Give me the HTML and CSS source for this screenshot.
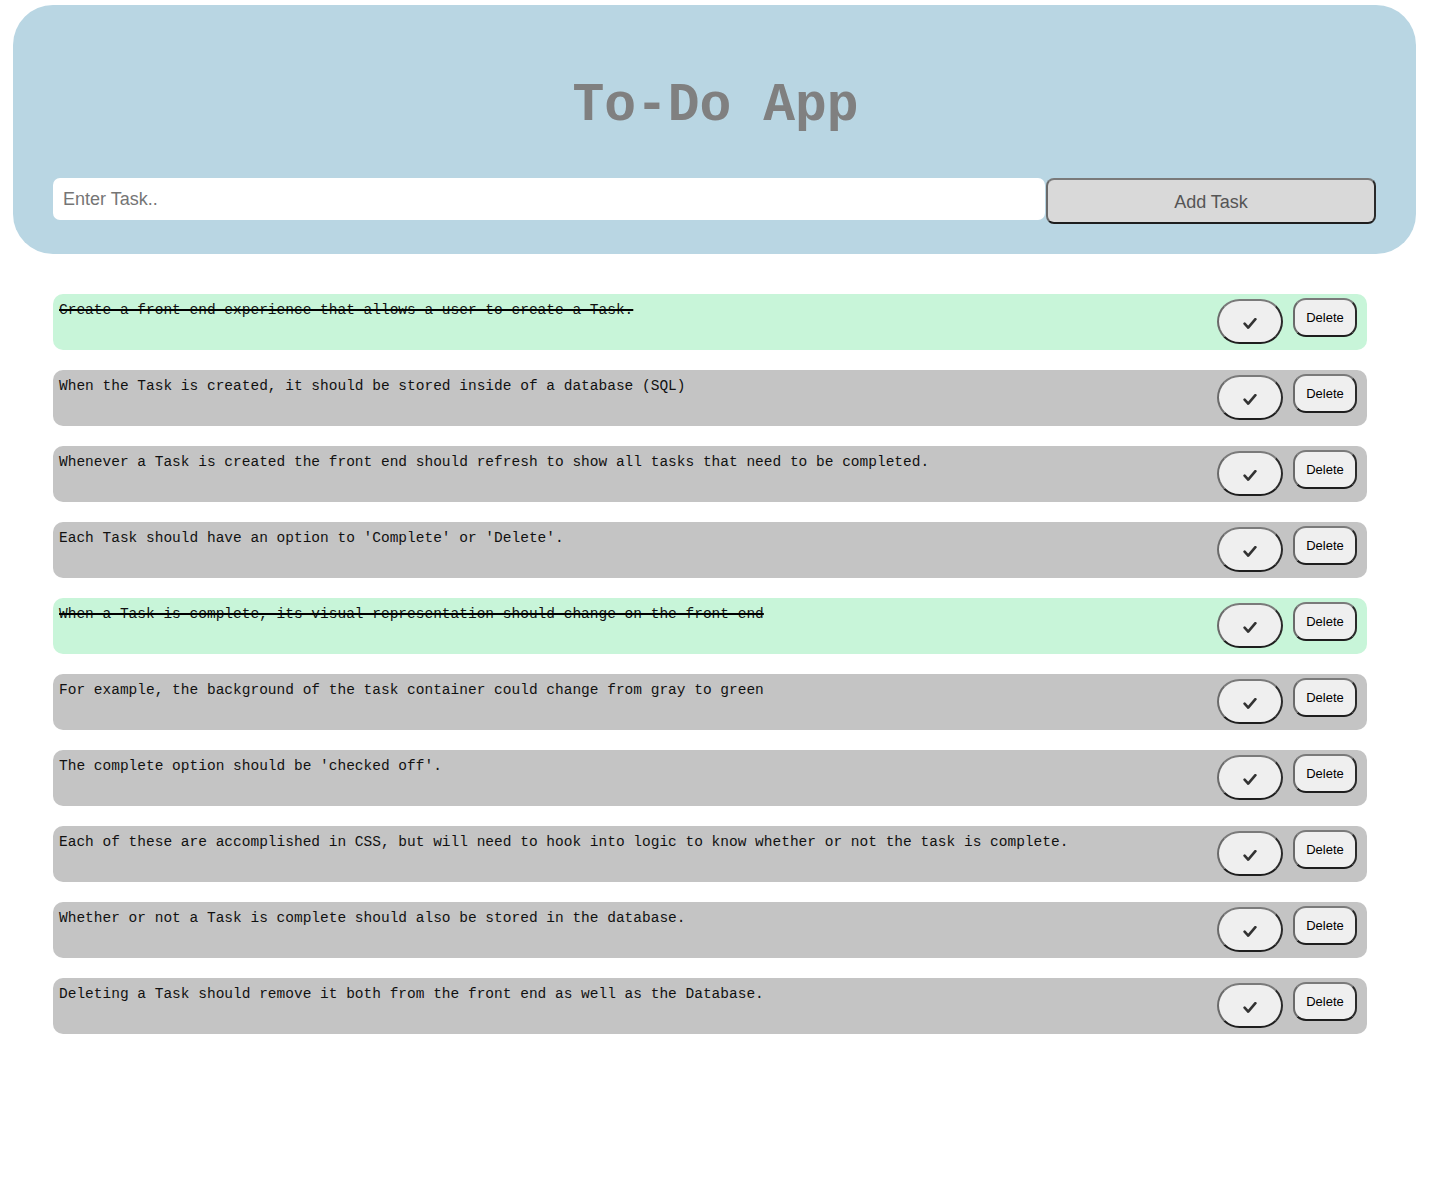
FILE: index.html
```html
<!DOCTYPE html>
<html lang="en">
<head>
<meta charset="utf-8">
<title>To-Do App</title>
<link rel="stylesheet" href="styles.css">
</head>
<body>
<header class="header">
  <h1 class="title">To-Do App</h1>
  <form class="add-form">
    <input class="task-input" type="text" placeholder="Enter Task..">
    <button class="add-btn" type="button">Add Task</button>
  </form>
</header>
<ul class="task-list">
  <li class="task done"><span class="task-text">Create a front end experience that allows a user to create a Task.</span><div class="actions"><button class="check-btn" type="button"><svg class="check-icon" viewBox="0 0 14 11"><path d="M1.6 5.6 L5.2 9.6 L12.4 1.2" fill="none" stroke="#333" stroke-width="2.6" stroke-linecap="round" stroke-linejoin="round"/></svg></button><button class="del-btn" type="button">Delete</button></div></li>
  <li class="task"><span class="task-text">When the Task is created, it should be stored inside of a database (SQL)</span><div class="actions"><button class="check-btn" type="button"><svg class="check-icon" viewBox="0 0 14 11"><path d="M1.6 5.6 L5.2 9.6 L12.4 1.2" fill="none" stroke="#333" stroke-width="2.6" stroke-linecap="round" stroke-linejoin="round"/></svg></button><button class="del-btn" type="button">Delete</button></div></li>
  <li class="task"><span class="task-text">Whenever a Task is created the front end should refresh to show all tasks that need to be completed.</span><div class="actions"><button class="check-btn" type="button"><svg class="check-icon" viewBox="0 0 14 11"><path d="M1.6 5.6 L5.2 9.6 L12.4 1.2" fill="none" stroke="#333" stroke-width="2.6" stroke-linecap="round" stroke-linejoin="round"/></svg></button><button class="del-btn" type="button">Delete</button></div></li>
  <li class="task"><span class="task-text">Each Task should have an option to 'Complete' or 'Delete'.</span><div class="actions"><button class="check-btn" type="button"><svg class="check-icon" viewBox="0 0 14 11"><path d="M1.6 5.6 L5.2 9.6 L12.4 1.2" fill="none" stroke="#333" stroke-width="2.6" stroke-linecap="round" stroke-linejoin="round"/></svg></button><button class="del-btn" type="button">Delete</button></div></li>
  <li class="task done"><span class="task-text">When a Task is complete, its visual representation should change on the front end</span><div class="actions"><button class="check-btn" type="button"><svg class="check-icon" viewBox="0 0 14 11"><path d="M1.6 5.6 L5.2 9.6 L12.4 1.2" fill="none" stroke="#333" stroke-width="2.6" stroke-linecap="round" stroke-linejoin="round"/></svg></button><button class="del-btn" type="button">Delete</button></div></li>
  <li class="task"><span class="task-text">For example, the background of the task container could change from gray to green</span><div class="actions"><button class="check-btn" type="button"><svg class="check-icon" viewBox="0 0 14 11"><path d="M1.6 5.6 L5.2 9.6 L12.4 1.2" fill="none" stroke="#333" stroke-width="2.6" stroke-linecap="round" stroke-linejoin="round"/></svg></button><button class="del-btn" type="button">Delete</button></div></li>
  <li class="task"><span class="task-text">The complete option should be 'checked off'.</span><div class="actions"><button class="check-btn" type="button"><svg class="check-icon" viewBox="0 0 14 11"><path d="M1.6 5.6 L5.2 9.6 L12.4 1.2" fill="none" stroke="#333" stroke-width="2.6" stroke-linecap="round" stroke-linejoin="round"/></svg></button><button class="del-btn" type="button">Delete</button></div></li>
  <li class="task"><span class="task-text">Each of these are accomplished in CSS, but will need to hook into logic to know whether or not the task is complete.</span><div class="actions"><button class="check-btn" type="button"><svg class="check-icon" viewBox="0 0 14 11"><path d="M1.6 5.6 L5.2 9.6 L12.4 1.2" fill="none" stroke="#333" stroke-width="2.6" stroke-linecap="round" stroke-linejoin="round"/></svg></button><button class="del-btn" type="button">Delete</button></div></li>
  <li class="task"><span class="task-text">Whether or not a Task is complete should also be stored in the database.</span><div class="actions"><button class="check-btn" type="button"><svg class="check-icon" viewBox="0 0 14 11"><path d="M1.6 5.6 L5.2 9.6 L12.4 1.2" fill="none" stroke="#333" stroke-width="2.6" stroke-linecap="round" stroke-linejoin="round"/></svg></button><button class="del-btn" type="button">Delete</button></div></li>
  <li class="task"><span class="task-text">Deleting a Task should remove it both from the front end as well as the Database.</span><div class="actions"><button class="check-btn" type="button"><svg class="check-icon" viewBox="0 0 14 11"><path d="M1.6 5.6 L5.2 9.6 L12.4 1.2" fill="none" stroke="#333" stroke-width="2.6" stroke-linecap="round" stroke-linejoin="round"/></svg></button><button class="del-btn" type="button">Delete</button></div></li>
</ul>
</body>
</html>
```

FILE: styles.css
```css
html, body {
  margin: 0;
  padding: 0;
  background: #ffffff;
}

body {
  font-family: "Liberation Sans", Arial, sans-serif;
}

.header {
  margin: 5px 13px 0 13px;
  padding: 71px 40px 30px 40px;
  background: #b9d6e3;
  border-radius: 40px;
}

.title {
  margin: 0;
  text-align: center;
  font-family: "Liberation Mono", "Courier New", monospace;
  font-weight: bold;
  font-size: 53px;
  line-height: 60px;
  color: #808080;
  padding-left: 2px;
}

.add-form {
  display: flex;
  align-items: flex-start;
  gap: 1px;
  margin-top: 42px;
}

.task-input {
  flex: 1;
  height: 42px;
  box-sizing: border-box;
  border: none;
  border-radius: 7px;
  padding: 0 10px;
  font-family: "Liberation Sans", Arial, sans-serif;
  font-size: 18px;
  background: #ffffff;
  outline: none;
}

.task-input::placeholder {
  color: #757575;
}

.add-btn {
  width: 330px;
  height: 46px;
  box-sizing: border-box;
  background: #d9d9d9;
  border: 2px solid;
  border-color: #7a7a7a #2a2a2a #1e1e1e #6a6a6a;
  border-radius: 8px;
  font-family: "Liberation Sans", Arial, sans-serif;
  font-size: 18px;
  color: #555555;
  padding: 2px 0 0 0;
}

.task-list {
  list-style: none;
  margin: 40px 62px 0 53px;
  padding: 0;
  display: flex;
  flex-direction: column;
  gap: 20px;
}

.task {
  display: flex;
  align-items: flex-start;
  justify-content: space-between;
  height: 56px;
  box-sizing: border-box;
  padding: 0 10px 0 5px;
  background: #c4c4c4;
  border-radius: 10px;
}

.task.done {
  background: #c8f5d9;
}

.task-text {
  font-family: "Liberation Mono", "Courier New", monospace;
  font-size: 14.5px;
  line-height: 17px;
  color: #111111;
  padding-top: 8px;
  padding-left: 1px;
}

.task.done .task-text {
  text-decoration: line-through;
  text-decoration-thickness: 2px;
  text-decoration-color: #000000;
}

.actions {
  display: flex;
  align-items: flex-start;
  gap: 10px;
  padding-top: 4px;
}

.check-btn {
  width: 66px;
  height: 45px;
  margin-top: 1px;
  box-sizing: border-box;
  background: #efefef;
  border: 2px solid;
  border-color: #7a7a7a #2a2a2a #1e1e1e #6a6a6a;
  border-radius: 23px;
  padding: 4px 0 0 0;
  display: flex;
  align-items: center;
  justify-content: center;
}

.check-icon {
  width: 14px;
  height: 11px;
  display: block;
}

.del-btn {
  width: 64px;
  height: 39px;
  box-sizing: border-box;
  background: #efefef;
  border: 2px solid;
  border-color: #7a7a7a #2a2a2a #1e1e1e #6a6a6a;
  border-radius: 13px;
  padding: 0;
  font-family: "Liberation Sans", Arial, sans-serif;
  font-size: 13px;
  color: #000000;
}
```
